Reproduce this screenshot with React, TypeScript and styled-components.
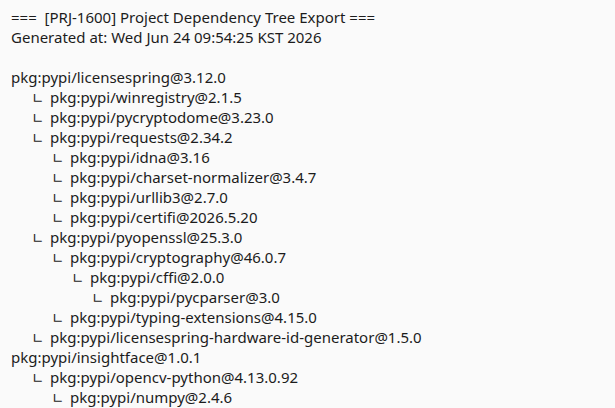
import React from "react";
import styled, { createGlobalStyle } from "styled-components";

const Global = createGlobalStyle`
  html, body {
    margin: 0;
    padding: 0;
    background: #fafafa;
  }
`;

const Page = styled.div`
  padding: 7px 11px;
  font-family: "Noto Sans", "Open Sans", sans-serif;
  font-size: 15px;
  line-height: 20px;
  color: #1c1c1c;
  white-space: pre;
`;

const Line = styled.div`
  height: 20px;
`;

const Row = styled.div<{ $level: number }>`
  display: flex;
  align-items: baseline;
  height: 20px;
  padding-left: ${(p) => (p.$level > 0 ? p.$level * 20 + 1 : 0)}px;
`;

const Branch = styled.span`
  display: inline-block;
  width: 18px;
  font-family: "DejaVu Sans", sans-serif;
  font-size: 14px;
  color: #1c1c1c;
`;

const Name = styled.span``;

type Node = { level: number; name: string };

const nodes: Node[] = [
  { level: 0, name: "pkg:pypi/licensespring@3.12.0" },
  { level: 1, name: "pkg:pypi/winregistry@2.1.5" },
  { level: 1, name: "pkg:pypi/pycryptodome@3.23.0" },
  { level: 1, name: "pkg:pypi/requests@2.34.2" },
  { level: 2, name: "pkg:pypi/idna@3.16" },
  { level: 2, name: "pkg:pypi/charset-normalizer@3.4.7" },
  { level: 2, name: "pkg:pypi/urllib3@2.7.0" },
  { level: 2, name: "pkg:pypi/certifi@2026.5.20" },
  { level: 1, name: "pkg:pypi/pyopenssl@25.3.0" },
  { level: 2, name: "pkg:pypi/cryptography@46.0.7" },
  { level: 3, name: "pkg:pypi/cffi@2.0.0" },
  { level: 4, name: "pkg:pypi/pycparser@3.0" },
  { level: 2, name: "pkg:pypi/typing-extensions@4.15.0" },
  { level: 1, name: "pkg:pypi/licensespring-hardware-id-generator@1.5.0" },
  { level: 0, name: "pkg:pypi/insightface@1.0.1" },
  { level: 1, name: "pkg:pypi/opencv-python@4.13.0.92" },
  { level: 2, name: "pkg:pypi/numpy@2.4.6" },
];

export default function App() {
  return (
    <>
      <Global />
      <Page>
        <Line>===  [PRJ-1600] Project Dependency Tree Export ===</Line>
        <Line>Generated at: Wed Jun 24 09:54:25 KST 2026</Line>
        <Line />
        {nodes.map((n, i) => (
          <Row key={i} $level={n.level}>
            {n.level > 0 && <Branch>∟</Branch>}
            <Name>{n.name}</Name>
          </Row>
        ))}
      </Page>
    </>
  );
}
